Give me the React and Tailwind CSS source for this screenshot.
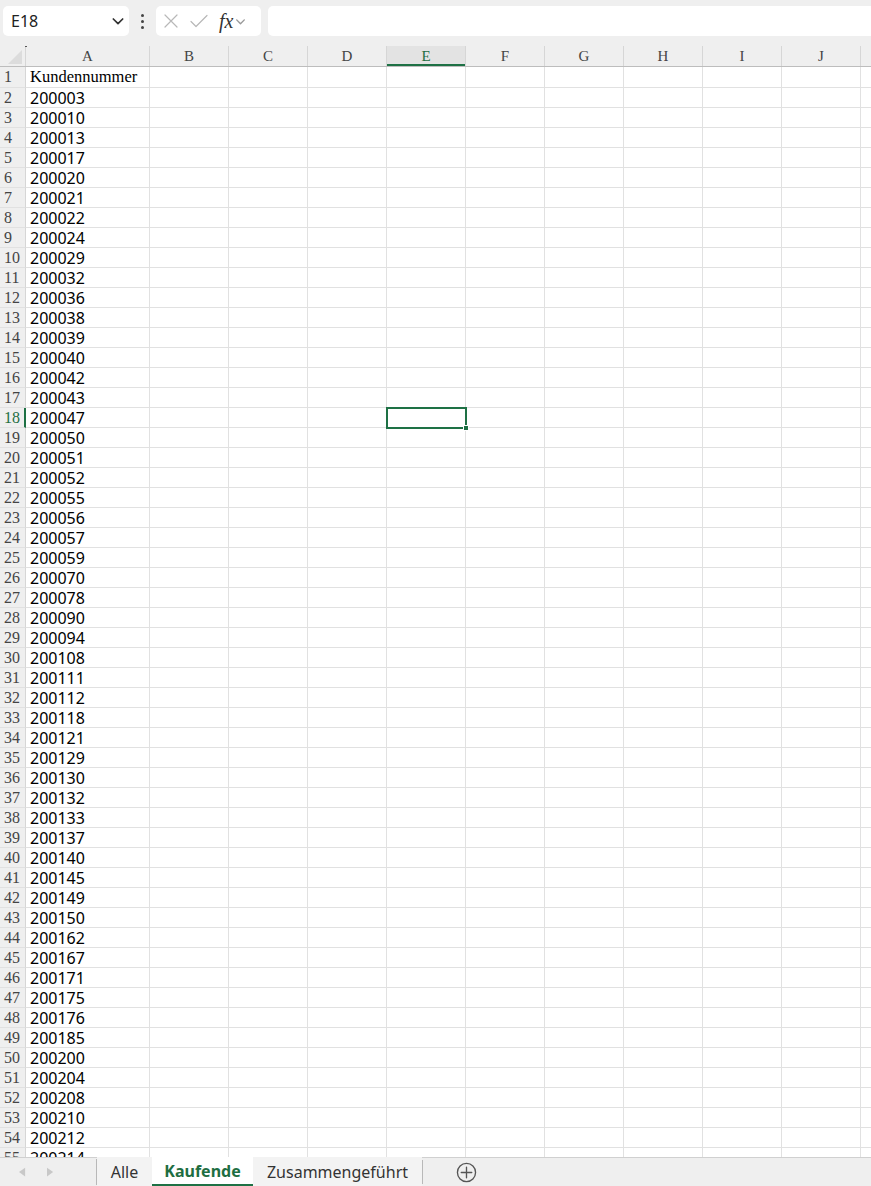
import React from "react";

const nums = [
  "200003","200010","200013","200017","200020","200021","200022","200024","200029","200032",
  "200036","200038","200039","200040","200042","200043","200047","200050","200051","200052",
  "200055","200056","200057","200059","200070","200078","200090","200094","200108","200111",
  "200112","200118","200121","200129","200130","200132","200133","200137","200140","200145",
  "200149","200150","200162","200167","200171","200175","200176","200185","200200","200204",
  "200208","200210","200212","200214",
];

const cols = ["A","B","C","D","E","F","G","H","I","J",""];
const colWidths = [124,79,79,79,79,79,79,79,79,79,79];

const serif = { fontFamily: '"Liberation Serif", "Times New Roman", serif' };
const sans = { fontFamily: '"Noto Sans", "Open Sans", sans-serif' };

function Chevron({ className = "" }) {
  return (
    <svg viewBox="0 0 12 12" className={className} fill="none" stroke="currentColor" strokeWidth="1.3" strokeLinecap="round" strokeLinejoin="round">
      <path d="M2.5 4.5 L6 8 L9.5 4.5" />
    </svg>
  );
}

function Toolbar() {
  return (
    <div className="h-[46px] shrink-0 bg-[#efefef] flex items-start pt-[6px] pl-[3px]">
      <div className="w-[126px] h-[30px] bg-white rounded-[5px] flex items-center justify-between pl-[8px] pr-[3px] text-[16px] text-[#222]" style={sans}>
        <span>E18</span>
        <Chevron className="w-[16px] h-[16px] text-[#333]" />
      </div>
      <div className="w-[27px] h-[30px] flex flex-col items-center justify-center gap-[3px]">
        <span className="w-[3px] h-[3px] rounded-full bg-[#444]" />
        <span className="w-[3px] h-[3px] rounded-full bg-[#444]" />
        <span className="w-[3px] h-[3px] rounded-full bg-[#444]" />
      </div>
      <div className="w-[105px] h-[30px] bg-white rounded-[5px] flex items-center pl-[7px] gap-[10px]">
        <svg viewBox="0 0 16 16" className="w-[16px] h-[16px]" fill="none" stroke="#b8b8b8" strokeWidth="1.2" strokeLinecap="round">
          <path d="M2 2 L14 14 M14 2 L2 14" />
        </svg>
        <svg viewBox="0 0 20 16" className="w-[20px] h-[16px]" fill="none" stroke="#b8b8b8" strokeWidth="1.2" strokeLinecap="round" strokeLinejoin="round">
          <path d="M2 8.5 L7 13.5 L18 2.5" />
        </svg>
        <div className="flex items-center">
          <span className="text-[20px] italic text-[#333] leading-none" style={serif}>fx</span>
          <Chevron className="w-[13px] h-[13px] text-[#999] ml-[1px]" />
        </div>
      </div>
      <div className="ml-[7px] flex-1 h-[30px] bg-white rounded-l-[5px]" />
    </div>
  );
}

function HeaderRow() {
  return (
    <div className="flex h-[21px] bg-[#efefef] border-b border-[#bdbdbd]">
      <div className="relative w-[26px] shrink-0 border-r border-[#d6d6d6]">
        <svg viewBox="0 0 16 16" className="absolute right-[3px] bottom-[2px] w-[14px] h-[14px]">
          <path d="M16 0 L16 16 L0 16 Z" fill="#dcdcdc" />
        </svg>
        <span className="absolute right-[-2px] top-[-1px] w-[2px] h-[2px] bg-[#555]" />
      </div>
      {cols.map((c, i) => {
        const sel = c === "E";
        return (
          <div
            key={i}
            className={`shrink-0 flex items-center justify-center text-[15px] border-r border-[#d6d6d6] ${sel ? "bg-[#e3e3e3] text-[#1e6e42] shadow-[inset_0_-2px_0_#1e7145]" : "text-[#444]"}`}
            style={{ ...serif, width: colWidths[i] }}
          >
            {c}
          </div>
        );
      })}
    </div>
  );
}

function DataRow({ n, value }) {
  const selRow = n === 18;
  const h = n === 1 ? "h-[21px]" : "h-[20px]";
  return (
    <div className={`flex ${h}`}>
      <div
        className={`w-[26px] shrink-0 bg-[#efefef] flex items-center pl-[4px] text-[16px] border-b border-[#e1e1e1] ${selRow ? "text-[#1e6e42] border-r-2 border-r-[#1e7145] bg-[#e3e3e3]" : "text-[#444] border-r border-r-[#d6d6d6]"}`}
        style={serif}
      >
        {n}
      </div>
      {cols.map((c, i) => {
        const isA = i === 0;
        const isSel = selRow && c === "E";
        return (
          <div
            key={i}
            className={`relative shrink-0 bg-white border-r border-b border-[#e1e1e1] flex items-center pl-[4px] text-black whitespace-nowrap ${n === 1 ? "text-[16.5px]" : "text-[16px]"}`}
            style={{ width: colWidths[i], ...(isA ? (n === 1 ? serif : sans) : {}) }}
          >
            {isA ? value : null}
            {isSel && (
              <div className="absolute left-[-1px] top-[-1px] w-[81px] h-[22px] border-2 border-[#1e7145] z-10">
                <span className="absolute right-[-4px] bottom-[-4px] w-[6px] h-[6px] bg-[#1e7145] border border-white" />
              </div>
            )}
          </div>
        );
      })}
    </div>
  );
}

function Tabs() {
  return (
    <div className="h-[29px] shrink-0 bg-[#efefef] border-t border-[#d0d0d0] flex items-stretch" style={sans}>
      <div className="w-[96px] flex items-center pl-[19px] gap-[21px]">
        <svg viewBox="0 0 8 10" className="w-[7px] h-[10px]"><path d="M7 0 L0 5 L7 10 Z" fill="#c8c8c8" /></svg>
        <svg viewBox="0 0 8 10" className="w-[7px] h-[10px]"><path d="M0 0 L7 5 L0 10 Z" fill="#c8c8c8" /></svg>
      </div>
      <div className="border-l border-[#b8b8b8] my-[1px]" />
      <div className="w-[55px] flex items-center justify-center text-[16px] text-[#333] bg-[#f3f3f3] -mt-px">Alle</div>
      <div className="w-[101px] flex items-center justify-center text-[16px] font-bold text-[#1e6e42] bg-white border-b-2 border-[#1e7145] -mt-px">Kaufende</div>
      <div className="w-[169px] flex items-center justify-center text-[16px] text-[#333] bg-[#f3f3f3] -mt-px">Zusammengeführt</div>
      <div className="border-l border-[#b8b8b8] my-[2px]" />
      <div className="flex items-center ml-[33px]">
        <svg viewBox="0 0 22 22" className="w-[21px] h-[21px]" fill="none" stroke="#555" strokeWidth="1.4">
          <circle cx="11" cy="11" r="9.5" />
          <path d="M11 5.5 V16.5 M5.5 11 H16.5" strokeLinecap="round" />
        </svg>
      </div>
    </div>
  );
}

export default function App() {
  return (
    <div className="w-[871px] h-[1186px] flex flex-col overflow-hidden bg-white">
      <Toolbar />
      <div className="flex-1 overflow-hidden">
        <HeaderRow />
        <DataRow n={1} value="Kundennummer" />
        {nums.map((v, i) => (
          <DataRow key={i} n={i + 2} value={v} />
        ))}
      </div>
      <Tabs />
    </div>
  );
}
